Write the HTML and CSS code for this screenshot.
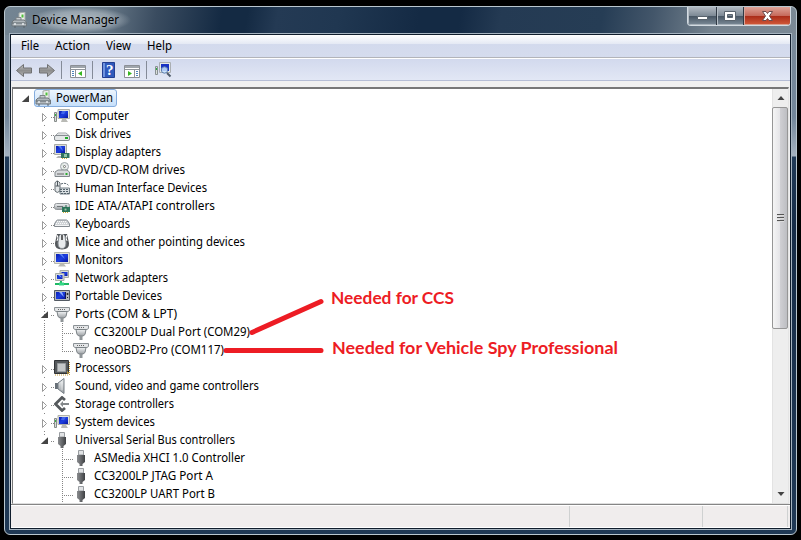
FILE: index.html
```html
<!DOCTYPE html>
<html lang="en">
<head>
<meta charset="utf-8">
<title>Device Manager</title>
<link rel="stylesheet" href="styles.css">
</head>
<body>
<svg class="defs" aria-hidden="true">
<defs>
<linearGradient id="gs" x2="0" y2="1"><stop stop-color="#f2f4f5"/><stop offset="1" stop-color="#9a9fa3"/></linearGradient>
<linearGradient id="gb" x2="1" y2="1"><stop stop-color="#0a1fb4"/><stop offset=".5" stop-color="#1d3fe0"/><stop offset="1" stop-color="#0716a0"/></linearGradient>
<linearGradient id="gd" x2="1"><stop stop-color="#8a8c8f"/><stop offset=".5" stop-color="#66686b"/><stop offset="1" stop-color="#3e4043"/></linearGradient>
<symbol id="root" viewBox="0 0 16 16"><path d="M8 1l6-1v9H8z" fill="#eef0ec" stroke="#a4a9a6"/><path d="M11.500 2.500v3" stroke="#4fc23b" stroke-width="2"/><path d="M5 5.500h5v4H5z" fill="#c7cccf" stroke="#7e8588"/><path d="M1 10l2-2h10l2.500 2v4H1z" fill="#b0b7bc" stroke="#6f777c"/><path d="M1 11h14M3 15h2M12 15h2" stroke="#596269"/><path d="M4 11v2M12 11v2" stroke="#e9edef" stroke-width="1.500"/></symbol>
<symbol id="computer" viewBox="0 0 16 16"><path d="M4 1.500h11.500v9H4z" fill="#e3e5df" stroke="#b0b1aa"/><path d="M5 3h9v7H5z" fill="url(#gb)"/><path d="M8 3h4l-2 3H7z" fill="#6d96ff" opacity=".5"/><path d="M8 11h4l2 3H7z" fill="#b9bab5"/><path d="M.5 4.500h2v9h-2z" fill="#d8dbd8" stroke="#858b89"/><path d="M1.500 6v2" stroke="#34b944"/></symbol>
<symbol id="monitor" viewBox="0 0 16 16"><path d="M.5.500h15v11H.5z" fill="#e2e3dd" stroke="#b5b6af"/><path d="M2 2h12v8H2z" fill="url(#gb)"/><path d="M5 2h3l3 5z" fill="#6d9cff" opacity=".7"/><path d="M6 12h4l2 2.500H4z" fill="#babbb5"/></symbol>
<symbol id="disk" viewBox="0 0 16 16"><path d="M1 10l3-3h8l3.500 3v4H1z" fill="url(#gs)" stroke="#a2a7aa"/><rect x=".5" y="9.500" width="15" height="5" rx="1.500" fill="#e4e7e8" stroke="#868c90"/><path d="M11 11h3v2h-3z" fill="#1faa28"/></symbol>
<symbol id="display" viewBox="0 0 16 16"><path d="M.5.500h12v10H.5z" fill="#dcded9" stroke="#a9aba7"/><path d="M2 2h9v7H2z" fill="url(#gb)"/><path d="M4 2h3l2 5z" fill="#6d9cff" opacity=".7"/><path d="M4 12h4v2H2z" fill="#b4b5b2"/><path d="M7 9h8.500v5H7z" fill="#31735e"/><path d="M10 10h3v3h-3z" fill="#91c5a5"/><path d="M8 14.500h6" stroke="#d4ab38" stroke-dasharray="1"/></symbol>
<symbol id="dvd" viewBox="0 0 16 16"><circle cx="10.500" cy="4.500" r="4" fill="#e9eced" stroke="#9ca4a8"/><path d="M8 1l3 4-1 3" fill="#cfe3ce"/><circle cx="10.500" cy="4.500" r="1" fill="#fff" stroke="#777"/><path d="M1 10l3-2h9l2.500 2v4.500H1z" fill="#d7dadd" stroke="#81888c"/><path d="M3 12h7" stroke="#666"/><path d="M11.500 11h2v2h-2z" fill="#2cae31"/></symbol>
<symbol id="hid" viewBox="0 0 16 16"><path d="M1 3q2-4 5 0v8q-3 3-5 0z" fill="#e1e5e7" stroke="#626b70"/><path d="M3.500 1v5M1.500 6h4" stroke="#4f575d"/><path d="M6 8h9.500v6H6z" fill="#d9dfe2" stroke="#748087"/><path d="M7 4q5-2 8 2M6 9.500h9M6 11.500h9M7 13.500h8" stroke="#53616a" stroke-dasharray="2 1" fill="none"/></symbol>
<symbol id="ide" viewBox="0 0 16 16"><rect x=".5" y="5.500" width="15" height="6" rx="2" fill="url(#gs)" stroke="#92979a"/><path d="M3 8.500h6" stroke="#707679"/><path d="M8 9h8v5H8z" fill="#2d7a5d"/><path d="M12 7v3M10 10h3v3h-3z" fill="#98c7a9" stroke="#286b51"/><path d="M9 14.500h5" stroke="#d4ab38" stroke-dasharray="1"/></symbol>
<symbol id="keyboard" viewBox="0 0 16 16"><path d="M3.500 4h9q1.500.5 3 4v2.500H.5V8q1.500-3.500 3-4z" fill="#cfd3d6" stroke="#838a90"/><path d="M3 5.500h10M2 7.500h12" stroke="#fafafa" stroke-dasharray="1"/><path d="M1 9.500h14" stroke="#f3f4f5"/></symbol>
<symbol id="mouse" viewBox="0 0 16 16"><path d="M3 0h10l2 9q.5 6.500-7 6.500T1 9z" fill="#54585c"/><path d="M3 1q2 3 0 6M13 1q-2 3 0 6" stroke="#fff" fill="none"/><path d="M5 2q3-4 6 0l1 7q0 5.500-4 5.500T4 9z" fill="#e8ebed" stroke="#888e93"/><path d="M8 1v5" stroke="#333" stroke-width="1.500"/></symbol>
<symbol id="network" viewBox="0 0 16 16"><path d="M6 .5h8.500v7H6z" fill="#d9ddd9" stroke="#a6aaa7"/><path d="M7.500 2h6v4h-6z" fill="url(#gb)"/><path d="M1.500 3.500H10v7H1.500z" fill="#d9ddd9" stroke="#a6aaa7"/><path d="M3 5h5.500v4H3z" fill="url(#gb)"/><path d="M4 5h2l2 3z" fill="#7ca7ff"/><path d="M7 11v2M1 14h14" stroke="#1fb965" stroke-width="2"/><path d="M5 12.500h5v3H5z" fill="#36d787"/></symbol>
<symbol id="portable" viewBox="0 0 16 16"><path d="M.5 2.500h15v10H.5z" fill="#b4b8bc" stroke="#535a63"/><path d="M2 4h9v7H2z" fill="url(#gb)"/><path d="M5 4h3l2 5z" fill="#8caeff"/><path d="M11.500 4v7" stroke="#101a55"/><circle cx="13.500" cy="6" r="1" fill="#222"/><path d="M13 9.500h1" stroke="#222"/></symbol>
<symbol id="port" viewBox="0 0 16 16"><path d="M.5 1.500h15v3L14 5.500H2L.5 4.500z" fill="#e4e6e8" stroke="#8c9296"/><path d="M4 3.500h8" stroke="#666" stroke-dasharray="1"/><path d="M3 5.500h10l-1 5-2 1.500H6l-2-1.500z" fill="url(#gs)" stroke="#7c8387"/><path d="M6.500 12h3v4h-3z" fill="#8f9598"/></symbol>
<symbol id="cpu" viewBox="0 0 16 16"><path d="M.5.500h14v13H.5z" fill="#55595c" stroke="#303336"/><path d="M3.500 3.500h8v8h-8z" fill="#c4c7c8" stroke="#999da0"/><path d="M1 15h14M15.500 2v13" stroke="#c59b3b" stroke-dasharray="1"/><path d="M13 12h1v2" stroke="#f1c048"/></symbol>
<symbol id="sound" viewBox="0 0 16 16"><path d="M1 5h3v6H1z" fill="#687078"/><path d="M4 5l6-4.500v15L4 11z" fill="url(#gs)" stroke="#747c83"/><path d="M8 4v8" stroke="#fff" opacity=".5"/></symbol>
<symbol id="storage" viewBox="0 0 16 16"><path d="M11 4L8 1.500 1.500 8 8 14.500l3-2.500" fill="none" stroke="#55595c" stroke-width="2.800"/><path d="M6 8l3-3v2h6v2H9v2z" fill="#83878a"/></symbol>
<symbol id="usb" viewBox="0 0 16 16"><path d="M5.500.5h5V5h-5z" fill="#e1e3e5" stroke="#999da1"/><path d="M4 5h8v7l-2.500 2v2h-3v-2L4 12z" fill="url(#gd)"/></symbol>
</defs>
</svg>
<div class="window">
  <header class="titlebar">
    <div class="title"><svg class="icon"><use href="#root"/></svg><span data-w="87">Device Manager</span></div>
    <div class="caption">
      <span class="cap"><svg width="28" height="18"><path d="M9.500 9.500h10v3h-10z" fill="#fff" stroke="#59636d"/></svg></span>
      <span class="cap"><svg width="26" height="18"><path d="M7.500 4.500h11v9h-11zM10.500 7.500v3h5v-3z" fill="#fff" fill-rule="evenodd" stroke="#59636d"/></svg></span>
      <span class="cap close"><svg width="46" height="18"><path d="M18.500 4.500h3.500l1.500 2 1.500-2h3.500L25.500 9l3 4.500H25l-1.500-2-1.500 2h-3.500L21.500 9z" fill="#fff" stroke="#6d4a4c"/></svg></span>
    </div>
  </header>
  <main class="client">
    <nav class="menu"><span data-w="18">File</span><span data-w="35">Action</span><span data-w="25">View</span><span data-w="25">Help</span></nav>
    <div class="toolbar">
      <svg width="170" height="22" viewBox="11 60 170 22">
        <defs><linearGradient id="ga" x2="0" y2="1"><stop stop-color="#c2c2c2"/><stop offset=".5" stop-color="#8e8e8e"/><stop offset="1" stop-color="#b4b4b4"/></linearGradient></defs>
        <path d="M16.500 70.500l7-6v3.500h8v5h-8v3.500z" fill="url(#ga)" stroke="#707173"/>
        <path d="M54.500 70.500l-7-6v3.500h-8v5h8v3.500z" fill="url(#ga)" stroke="#707173"/>
        <path d="M61.500 61v18M92.500 61v18M146.500 61v18" stroke="#858b98"/>
        <g><path d="M70.500 65.500h15v12h-15z" fill="#fff" stroke="#8b8f96"/><path d="M71 67h14" stroke="#9fa5ac" stroke-width="2"/><path d="M70 69.500h16M75.500 70v8" stroke="#8f949b"/><path d="M72 71.500h2M72 73.500h2M72 75.500h2" stroke="#4e83bd"/><path d="M82 71v5l-4-2.500z" fill="#38b621"/></g>
        <path d="M102.500 62.500h12v15h-12z" fill="#2f59bc" stroke="#233e91"/><path d="M103 63h2v14h-2z" fill="#6f93de"/>
        <text x="106" y="75" class="q">?</text>
        <path d="M124.500 65.500h15v12h-15z" fill="#fff" stroke="#8b8f96"/><path d="M125 67h14" stroke="#9fa5ac" stroke-width="2"/><path d="M124 69.500h16M134.500 70v8" stroke="#8f949b"/><path d="M136 71.500h2M136 73.500h2M136 75.500h2" stroke="#4e83bd"/><path d="M128 71v5l4-2.500z" fill="#38b621"/>
        <path d="M159.500 62.500h11v10h-11z" fill="#e7e9e7" stroke="#aaaeb2"/><path d="M161 64h8v7h-8z" fill="#1832c4"/><path d="M155.500 66.500h2v8h-2z" fill="#d9ddda" stroke="#899193"/><path d="M156.500 68v2" stroke="#29af3e"/><circle cx="164.500" cy="70" r="3.200" fill="#c8e3ff" fill-opacity=".85" stroke="#5e7fae"/><path d="M167 73l3.500 3.500" stroke="#505c6c" stroke-width="2"/>
      </svg>
    </div>
    <div class="panel">
      <ul class="tree" id="tree">
        <li class="row root"><i class="exp open"></i><b class="sel"><svg class="icon"><use href="#root"/></svg><span data-w="57">PowerMan</span></b></li>
      </ul>
      <div class="scroll"><svg class="arrow" width="16" height="18"><path d="M4.500 11L8 7l3.500 4z" fill="#444"/></svg><div class="thumb"><i></i><i></i><i></i></div><svg class="arrow down" width="16" height="18"><path d="M4.500 7L8 11l3.500-4z" fill="#444"/></svg></div>
      <div class="note ccs" data-w="123">Needed for CCS</div>
      <div class="note spy" data-w="286">Needed for Vehicle Spy Professional</div>
      <svg class="pointers" width="110" height="70" viewBox="220 290 110 70"><path d="M253 332.500L322 301.500M227 350.500h95" stroke="#ed1c24" stroke-width="5" stroke-linecap="round"/></svg>
    </div>
    <footer class="status"><span></span><span></span><span></span></footer>
  </main>
</div>
<script src="tree.js"></script>
</body>
</html>
```
FILE: styles.css
```css
* { box-sizing: border-box; }
body { margin: 0; width: 801px; height: 540px; padding: 6px 4px; background: #000; overflow: hidden; font: 12px/18px "Noto Sans", "Open Sans", sans-serif; color: #000; }
.defs { position: absolute; width: 0; height: 0; }
.window { width: 793px; height: 529px; padding: 0 5px 5px 5px; border: 1px solid #b9c6ce; border-radius: 6px; display: flex; flex-direction: column;
  background: linear-gradient(100deg, #748593 0, #667786 100px, #3a4c60 150px, #142a43 215px, #142a43 240px, #243a54 270px, #203751 330px, #142a44 410px, #142a44 450px, #243a53 490px, #263d55 590px, #43566a 640px, #75838f 700px, #7b8995 100%) 0 0 / 100% 28px no-repeat, linear-gradient(#7b8b99, #72869a 110px, #a5b2c0 149px, #203a57 150px, #162c47 220px, #203955); }
.titlebar { height: 27px; display: flex; justify-content: space-between; flex: none; }
.title { display: flex; align-items: center; gap: 5px; height: 26px; padding: 0 12px 0 1px; background: radial-gradient(ellipse closest-side at 58% 50%, rgba(205,212,216,.75), rgba(180,190,198,.6) 65%, transparent); white-space: nowrap; }
.icon { width: 16px; height: 16px; flex: none; display: block; }
.caption { display: flex; height: 19px; border: 1px solid #d3dbe2; border-top: 0; border-radius: 0 0 4px 4px; overflow: hidden; }
.cap { height: 18px; background: linear-gradient(#b1b9c1, #7d8995 48%, #465462 50%, #7c8b98); border-right: 1px solid #2f3944; box-shadow: inset 1px 0 #b5bec6, inset 0 -1px #a7b1ba; }
.close { border: 0; background: linear-gradient(#dfa297, #c66a5c 48%, #a92b18 50%, #d35b3b); box-shadow: inset 1px 0 #d8a49a, inset 0 -1px #d8a090; }
.cap svg { display: block; }
.client { flex: 1; min-height: 0; border: 1px solid #101d2c; outline: 1px solid #a6b4c0; background: #f0f0f0; display: flex; flex-direction: column; }
.menu { height: 22px; flex: none; padding-left: 10px; display: flex; gap: 16px; background: linear-gradient(#fff, #e4e9f4 9px, #d3daed 9px, #d5dcee); white-space: nowrap; line-height: 22px; }
.toolbar { height: 24px; flex: none; padding-top: 2px; border-top: 1px solid #b2b4ba; border-bottom: 1px solid #b5bdd5; background: linear-gradient(#fff 1px, #d2d9ed 1px, #e2e7f5); }
.toolbar svg { display: block; }
.q { font: bold 15px "Liberation Serif", serif; fill: #fff; }
.panel { position: relative; height: 417px; flex: none; margin: 6px 1px 0; border: solid #777; border-width: 2px 1px 1px 1px; border-right-color: #e5e5e5; border-bottom-color: #ddd; background: #fff; display: flex; }
.tree { list-style: none; margin: 0; padding: 0; flex: 1; overflow: hidden; white-space: nowrap; height: 414px; }
.row { height: 18px; display: flex; align-items: center; position: relative; }
.row span { display: inline-block; }
.root { padding-left: 8px; }
.sel { font-weight: 400; display: flex; align-items: center; gap: 5px; height: 18px; margin-left: 5px; width: 83px; border: 1px solid #84acdd; border-radius: 3px; background: linear-gradient(#edf5fd, #c6dffa); }
.exp { width: 8px; height: 18px; display: block; }
.open { background: #444; clip-path: polygon(100% 35%, 100% 72%, 10% 72%); }
.l1 { padding-left: 27px; background: repeating-linear-gradient(#858585 0 1px, transparent 1px 3px) 31px 0 / 1px 18px no-repeat, repeating-linear-gradient(90deg, #858585 0 1px, transparent 1px 2px) 38px 10px / 3px 1px no-repeat; }
.l1.last { background-size: 1px 4px, 3px 1px; }
.l1 .exp:not(.open) { height: 13px; background: #fff; }
.l1 .icon { margin-left: 6px; margin-right: 5px; }
.l1 .exp svg { display: block; }
.l2 { padding-left: 60px; background: repeating-linear-gradient(#858585 0 1px, transparent 1px 2px) 49px 0 / 1px 18px no-repeat, repeating-linear-gradient(90deg, #858585 0 1px, transparent 1px 2px) 49px 10px / 11px 1px no-repeat; }
.l2.guide { background: repeating-linear-gradient(#858585 0 1px, transparent 1px 2px) 31px 0 / 1px 18px no-repeat, repeating-linear-gradient(#858585 0 1px, transparent 1px 2px) 49px 0 / 1px 18px no-repeat, repeating-linear-gradient(90deg, #858585 0 1px, transparent 1px 2px) 49px 10px / 11px 1px no-repeat; }
.l2.end { background-size: 1px 18px, 1px 10px, 11px 1px; }
.l2 .icon { margin-right: 5px; }
.scroll { width: 16px; flex: none; background: #eee; border-left: 1px solid #e3e3e3; display: flex; flex-direction: column; height: 414px; }
.arrow { display: block; flex: none; }
.down { margin-top: auto; }
.thumb { height: 222px; margin-left: -1px; border: 1px solid #969696; border-radius: 2px; background: linear-gradient(90deg, #f5f5f5, #e5e5e8 48%, #cfcfd3 52%, #bdbec2); display: flex; flex-direction: column; align-items: center; justify-content: center; gap: 1px; }
.thumb i { width: 7px; height: 2px; background: #555; border-bottom: 1px solid #ddd; }
.note { position: absolute; font: bold 17px/20px Lato, "Noto Sans", sans-serif; color: #ed1c24; white-space: nowrap; }
.ccs { left: 318px; top: 199px; }
.spy { left: 319px; top: 249px; }
.pointers { position: absolute; left: 206px; top: 201px; }
.status { flex: 1; display: flex; border-top: 1px solid #858585; box-shadow: inset 0 1px #fff, inset 0 -1px #fff; background: #f0eded; padding: 1px 1px 1px 0; }
.status span { border-right: 1px solid #cfd1d1; width: 133px; }
.status span:first-child { width: 559px; }
.status span:last-child { width: 85px; }
```
FILE: tree.js
```js
// level, icon, label, label width, state
const rows = [
  [1, 'computer', 'Computer', 54], [1, 'disk', 'Disk drives', 56], [1, 'display', 'Display adapters', 86],
  [1, 'dvd', 'DVD/CD-ROM drives', 110], [1, 'hid', 'Human Interface Devices', 132],
  [1, 'ide', 'IDE ATA/ATAPI controllers', 140], [1, 'keyboard', 'Keyboards', 55],
  [1, 'mouse', 'Mice and other pointing devices', 170], [1, 'monitor', 'Monitors', 48],
  [1, 'network', 'Network adapters', 93], [1, 'portable', 'Portable Devices', 87],
  [1, 'port', 'Ports (COM & LPT)', 102, 'open'], [2, 'port', 'CC3200LP Dual Port (COM29)', 156, 'guide'],
  [2, 'port', 'neoOBD2-Pro (COM117)', 130, 'guide end'], [1, 'cpu', 'Processors', 56],
  [1, 'sound', 'Sound, video and game controllers', 184], [1, 'storage', 'Storage controllers', 99],
  [1, 'computer', 'System devices', 80], [1, 'usb', 'Universal Serial Bus controllers', 160, 'open last'],
  [2, 'usb', 'ASMedia XHCI 1.0 Controller', 151], [2, 'usb', 'CC3200LP JTAG Port A', 119],
  [2, 'usb', 'CC3200LP UART Port B', 121]
];
const tree = document.getElementById('tree');
for (const [level, icon, label, width, state = ''] of rows) {
  const li = document.createElement('li');
  const open = state.includes('open');
  li.className = `row l${level} ${state.replace('open', '')}`;
  const exp = open ? '<i class="exp open"></i>' : '<i class="exp"><svg width="8" height="13" viewBox="0 3 8 13"><path d="M2.500 6.500v8l4-4z" fill="#fff" stroke="#9a9a9a"/></svg></i>';
  li.innerHTML = `${level === 1 ? exp : ''}<svg class="icon"><use href="#${icon}"/></svg><span data-w="${width}"></span>`;
  li.querySelector('span').textContent = label;
  tree.append(li);
}
for (const el of document.querySelectorAll('[data-w]')) {
  const target = +el.dataset.w;
  const natural = el.getBoundingClientRect().width;
  el.style.width = target + 'px';
  el.style.transformOrigin = '0 50%';
  el.style.transform = `scaleX(${target / natural})`;
}
```
